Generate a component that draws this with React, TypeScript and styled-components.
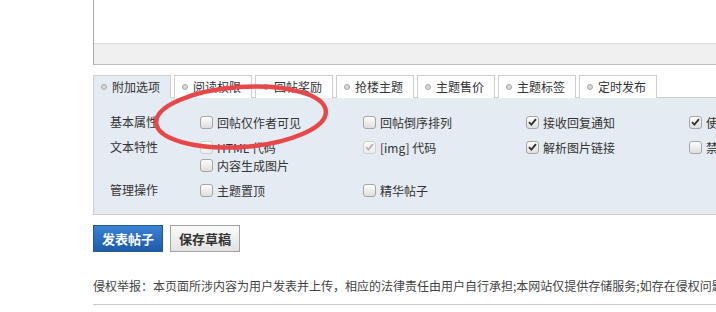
import React from "react"
import styled, { createGlobalStyle } from "styled-components"

const GlobalStyle = createGlobalStyle`
  html, body {
    margin: 0;
    padding: 0;
    background: #fff;
    overflow: hidden;
  }
  body {
    font-family: "Noto Sans CJK SC", "Noto Sans", sans-serif;
    font-size: 12px;
    color: #333;
  }
`

type Option = { text: string; checked?: boolean; disabled?: boolean }
type OptionRow = { label: string; options: Option[] }

const tabs = ["附加选项", "阅读权限", "回帖奖励", "抢楼主题", "主题售价", "主题标签", "定时发布"]

const rows: OptionRow[] = [
  {
    label: "基本属性",
    options: [
      { text: "回帖仅作者可见" },
      { text: "回帖倒序排列" },
      { text: "接收回复通知", checked: true },
      { text: "使用个人签名", checked: true },
    ],
  },
  {
    label: "文本特性",
    options: [
      { text: "HTML 代码", disabled: true },
      { text: "[img] 代码", checked: true, disabled: true },
      { text: "解析图片链接", checked: true },
      { text: "禁用链接识别" },
      { text: "内容生成图片" },
    ],
  },
  {
    label: "管理操作",
    options: [
      { text: "主题置顶" },
      { text: "精华帖子" },
    ],
  },
]

const App: React.FC = () => {
  return (
    <Page>
      <GlobalStyle />
      <Editor>
        <EditorBody />
        <EditorStatus />
      </Editor>

      <TabBar>
        {tabs.map((t, i) => (
          <Tab key={t} $active={i === 0}>
            <TabDot />
            {t}
          </Tab>
        ))}
      </TabBar>

      <Panel>
        {rows.map(row => (
          <Row key={row.label}>
            <RowLabel>{row.label}</RowLabel>
            <Options>
              {row.options.map(o => (
                <OptionItem key={o.text}>
                  <CheckBox $disabled={o.disabled}>
                    {o.checked && (
                      <svg width="9" height="8" viewBox="0 0 9 8">
                        <path
                          d="M1 4.2 L3.4 6.6 L8 1.2"
                          fill="none"
                          stroke={o.disabled ? "#b5b5b5" : "#333"}
                          strokeWidth="1.9"
                        />
                      </svg>
                    )}
                  </CheckBox>
                  {o.text}
                </OptionItem>
              ))}
            </Options>
          </Row>
        ))}
      </Panel>

      <Buttons>
        <PrimaryButton>发表帖子</PrimaryButton>
        <GrayButton>保存草稿</GrayButton>
      </Buttons>

      <Notice>
        侵权举报：本页面所涉内容为用户发表并上传，相应的法律责任由用户自行承担;本网站仅提供存储服务;如存在侵权问题，请联系我们及时处理。
      </Notice>

      {/* red annotation drawn over the tabs and options */}
      <Mark width="200" height="80" viewBox="0 0 200 80">
        <ellipse
          cx="100"
          cy="40"
          rx="85"
          ry="30"
          fill="none"
          stroke="#e8474a"
          strokeWidth="4.5"
          transform="rotate(-4 100 40)"
        />
      </Mark>
    </Page>
  )
}

export default App

const Page = styled.div`
  position: relative;
  width: 1000px;
  padding-left: 93px;
`

const Editor = styled.div`
  border-left: 1px solid #a9a9a9;
  border-bottom: 1px solid #bdbdbd;
`

const EditorBody = styled.div`
  height: 43px;
  background: #fff;
`

const EditorStatus = styled.div`
  height: 20px;
  background: #f0f0f0;
  border-top: 1px solid #dcdcdc;
`

const TabBar = styled.div`
  display: flex;
  gap: 3px;
  margin-top: 10px;
  position: relative;
  z-index: 1;
`

const Tab = styled.div<{ $active?: boolean }>`
  box-sizing: border-box;
  width: 78px;
  height: 23px;
  display: flex;
  align-items: center;
  gap: 5px;
  padding-left: 7px;
  border: 1px solid #cfcfcf;
  border-bottom: none;
  background: ${p => (p.$active ? "#e5ebf2" : "#fff")};
  color: #333;
  font-size: 12px;
  line-height: 22px;
`

const TabDot = styled.span`
  box-sizing: border-box;
  width: 6px;
  height: 6px;
  border-radius: 50%;
  border: 1px solid #a8a8a8;
  background: #d8d8d8;
`

const Panel = styled.div`
  margin-top: -1px;
  padding: 15px 0 15px 16px;
  background: #e5ebf2;
  border: 1px solid #cfcfcf;
  display: flex;
  flex-direction: column;
  gap: 7px;
`

const Row = styled.div`
  display: flex;
  align-items: flex-start;
`

const RowLabel = styled.div`
  width: 90px;
  flex: none;
  line-height: 18px;
  color: #333;
`

const Options = styled.div`
  display: flex;
  flex-wrap: wrap;
  width: 652px;
`

const OptionItem = styled.label`
  width: 163px;
  display: flex;
  align-items: center;
  gap: 4px;
  height: 18px;
  white-space: nowrap;
  color: #333;
`

const CheckBox = styled.span<{ $disabled?: boolean }>`
  box-sizing: border-box;
  width: 13px;
  height: 13px;
  flex: none;
  display: inline-flex;
  align-items: center;
  justify-content: center;
  border-radius: 3px;
  border: 1px solid ${p => (p.$disabled ? "#cfcfcf" : "#a6a6a6")};
  background: ${p =>
    p.$disabled
      ? "linear-gradient(#fafafa, #ececec)"
      : "linear-gradient(#fdfdfd, #dedede)"};
`

const Buttons = styled.div`
  display: flex;
  gap: 7px;
  margin-top: 10px;
`

const BaseButton = styled.button`
  box-sizing: border-box;
  width: 70px;
  height: 27px;
  padding: 0;
  font-family: "Noto Sans CJK SC", sans-serif;
  font-size: 13px;
  font-weight: bold;
  cursor: pointer;
`

const PrimaryButton = styled(BaseButton)`
  color: #fff;
  border: 1px solid #235994;
  background: linear-gradient(#3b82d4, #1f5ba8);
`

const GrayButton = styled(BaseButton)`
  color: #333;
  border: 1px solid #a3a3a3;
  background: linear-gradient(#fbfbfb, #e2e2e2);
`

const Notice = styled.div`
  margin-top: 26px;
  padding-bottom: 10px;
  border-bottom: 1px solid #cdcdcd;
  white-space: nowrap;
  line-height: 16px;
  color: #444;
`

const Mark = styled.svg`
  position: absolute;
  left: 141px;
  top: 77px;
  z-index: 2;
  pointer-events: none;
`
